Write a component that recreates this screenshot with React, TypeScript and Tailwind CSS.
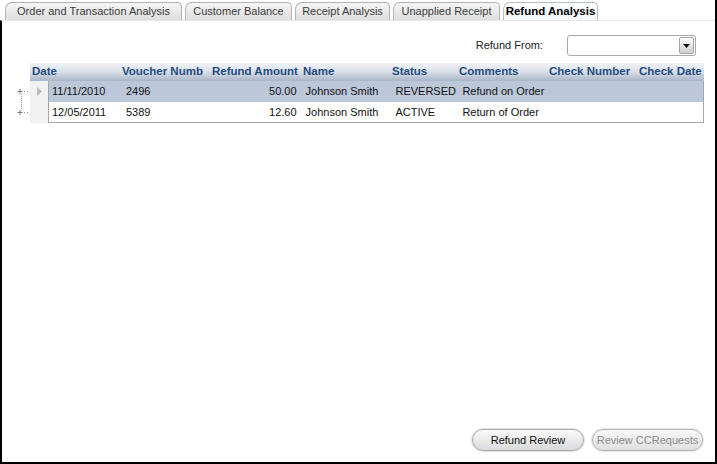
import React from 'react';

const tabs = [
  { label: 'Order and Transaction Analysis', w: 'w-[177px]' },
  { label: 'Customer Balance', w: 'w-[107px]' },
  { label: 'Receipt Analysis', w: 'w-[95px]' },
  { label: 'Unapplied Receipt', w: 'w-[107px]' },
  { label: 'Refund Analysis', w: 'w-[95px]', active: true },
];

const rows = [
  { date: '11/11/2010', voucher: '2496', amount: '50.00', name: 'Johnson Smith', status: 'REVERSED', comments: 'Refund on Order', selected: true },
  { date: '12/05/2011', voucher: '5389', amount: '12.60', name: 'Johnson Smith', status: 'ACTIVE', comments: 'Return of Order' },
];

function TreeLines({ first }: { first: boolean }) {
  // plus sign with dotted connector, vertical dotted line joins the rows
  return (
    <svg width="28" height="21" className="shrink-0">
      <path d="M15.5 10.5h5M18 8v5" stroke="#7a7a7a" strokeWidth="1" />
      <path d="M22 10.5h5" stroke="#9a9a9a" strokeWidth="1" strokeDasharray="1 2" />
      {first ? (
        <path d="M19.5 13v8" stroke="#9a9a9a" strokeWidth="1" strokeDasharray="1 1" />
      ) : (
        <path d="M19.5 0v8" stroke="#9a9a9a" strokeWidth="1" strokeDasharray="1 1" />
      )}
    </svg>
  );
}

export default function App() {
  return (
    <div className="w-[717px] h-[464px] flex flex-col bg-white border-r-2 border-black font-['Liberation_Sans',Arial,sans-serif] text-[11px] text-[#111]">
      {/* Tabs */}
      <div className="h-[20px] flex items-end gap-[3px] pl-[5px] shrink-0">
        {tabs.map((t) => (
          <div
            key={t.label}
            className={`${t.w} h-[18px] flex items-center justify-center rounded-tl-[7px] rounded-tr-[5px] border border-b-0 ${
              t.active
                ? 'bg-gradient-to-b from-[#ffffff] to-[#f2f5fa] border-[#b8bcc4] font-bold text-[11.5px] text-black'
                : 'bg-gradient-to-b from-[#f6f6f6] to-[#dedede] border-[#b2b2b2] text-[#3a3a3a]'
            }`}
          >
            {t.label}
          </div>
        ))}
      </div>

      {/* Content panel */}
      <div className="flex-1 flex flex-col border-l-2 border-b-2 border-black border-t border-t-[#e8e8e8]">
        {/* Refund From */}
        <div className="flex items-center justify-end gap-[24px] pr-[19px] pt-[14px]">
          <span className="text-[#222]">Refund From:</span>
          <div className="w-[129px] h-[21px] rounded-[3px] border border-[#a9a9a9] bg-white flex items-center justify-end pr-[1px]">
            <div className="w-[15px] h-[17px] rounded-[2px] border border-[#a4a4a4] bg-gradient-to-b from-[#ffffff] to-[#cfcfcf] flex items-center justify-center">
              <svg width="7" height="4" viewBox="0 0 7 4">
                <path d="M0 0h7L3.5 4z" fill="#111" />
              </svg>
            </div>
          </div>
        </div>

        {/* Grid */}
        <div className="mt-[7px] flex flex-col">
          <div className="flex">
            <div className="w-[28px] shrink-0" />
            <div className="w-[674px] h-[18px] flex items-center bg-gradient-to-b from-[#f1f3f7] via-[#d9dfe8] to-[#a9b5c7] font-bold text-[11.5px] text-[#234a7e] whitespace-nowrap">
              <div className="w-[90px] pl-[2px]">Date</div>
              <div className="w-[90px] pl-[2px]">Voucher Numb</div>
              <div className="w-[90px] pl-[2px]">Refund Amount</div>
              <div className="w-[90px] pl-[3px]">Name</div>
              <div className="w-[67px] pl-[2px]">Status</div>
              <div className="w-[90px] pl-[2px]">Comments</div>
              <div className="w-[90px] pl-[2px]">Check Number</div>
              <div className="w-[67px] pl-[2px]">Check Date</div>
            </div>
          </div>
          {rows.map((r, i) => (
            <div key={r.date} className="flex">
              <TreeLines first={i === 0} />
              <div className="w-[18px] h-[21px] shrink-0 bg-[#f1f1f1] flex items-center justify-center">
                {r.selected && (
                  <svg width="5" height="9" viewBox="0 0 5 9">
                    <path d="M0 0l5 4.5L0 9z" fill="#b9b9b9" />
                  </svg>
                )}
              </div>
              <div
                className={`w-[656px] h-[21px] flex items-center border-l border-r border-[#a6a6a6] whitespace-nowrap ${
                  i === rows.length - 1 ? 'border-b' : ''
                } ${r.selected ? 'bg-[#bcc7da]' : 'bg-white'}`}
              >
                <div className="w-[72px] pl-[3px]">{r.date}</div>
                <div className="w-[90px] pl-[5px]">{r.voucher}</div>
                <div className="w-[90px] pr-[4px] text-right">{r.amount}</div>
                <div className="w-[90px] pl-[5px]">{r.name}</div>
                <div className="w-[67px] pl-[5px]">{r.status}</div>
                <div className="w-[90px] pl-[5px]">{r.comments}</div>
                <div className="w-[90px]" />
                <div className="w-[66px]" />
              </div>
            </div>
          ))}
        </div>

        {/* Buttons */}
        <div className="mt-auto flex justify-end gap-[8px] pr-[12px] pb-[11px]">
          <button className="w-[112px] h-[22px] rounded-full border border-[#a9a9a9] bg-gradient-to-b from-[#fbfbfb] to-[#dadada] shadow-[0_0_0_1px_#e4e4e4] text-[#111]">
            Refund Review
          </button>
          <button className="w-[111px] h-[22px] rounded-full border border-[#b5b5b5] bg-gradient-to-b from-[#f8f8f8] to-[#e0e0e0] shadow-[0_0_0_1px_#e8e8e8] text-[#8a8a8a]">
            Review CCRequests
          </button>
        </div>
      </div>
    </div>
  );
}
